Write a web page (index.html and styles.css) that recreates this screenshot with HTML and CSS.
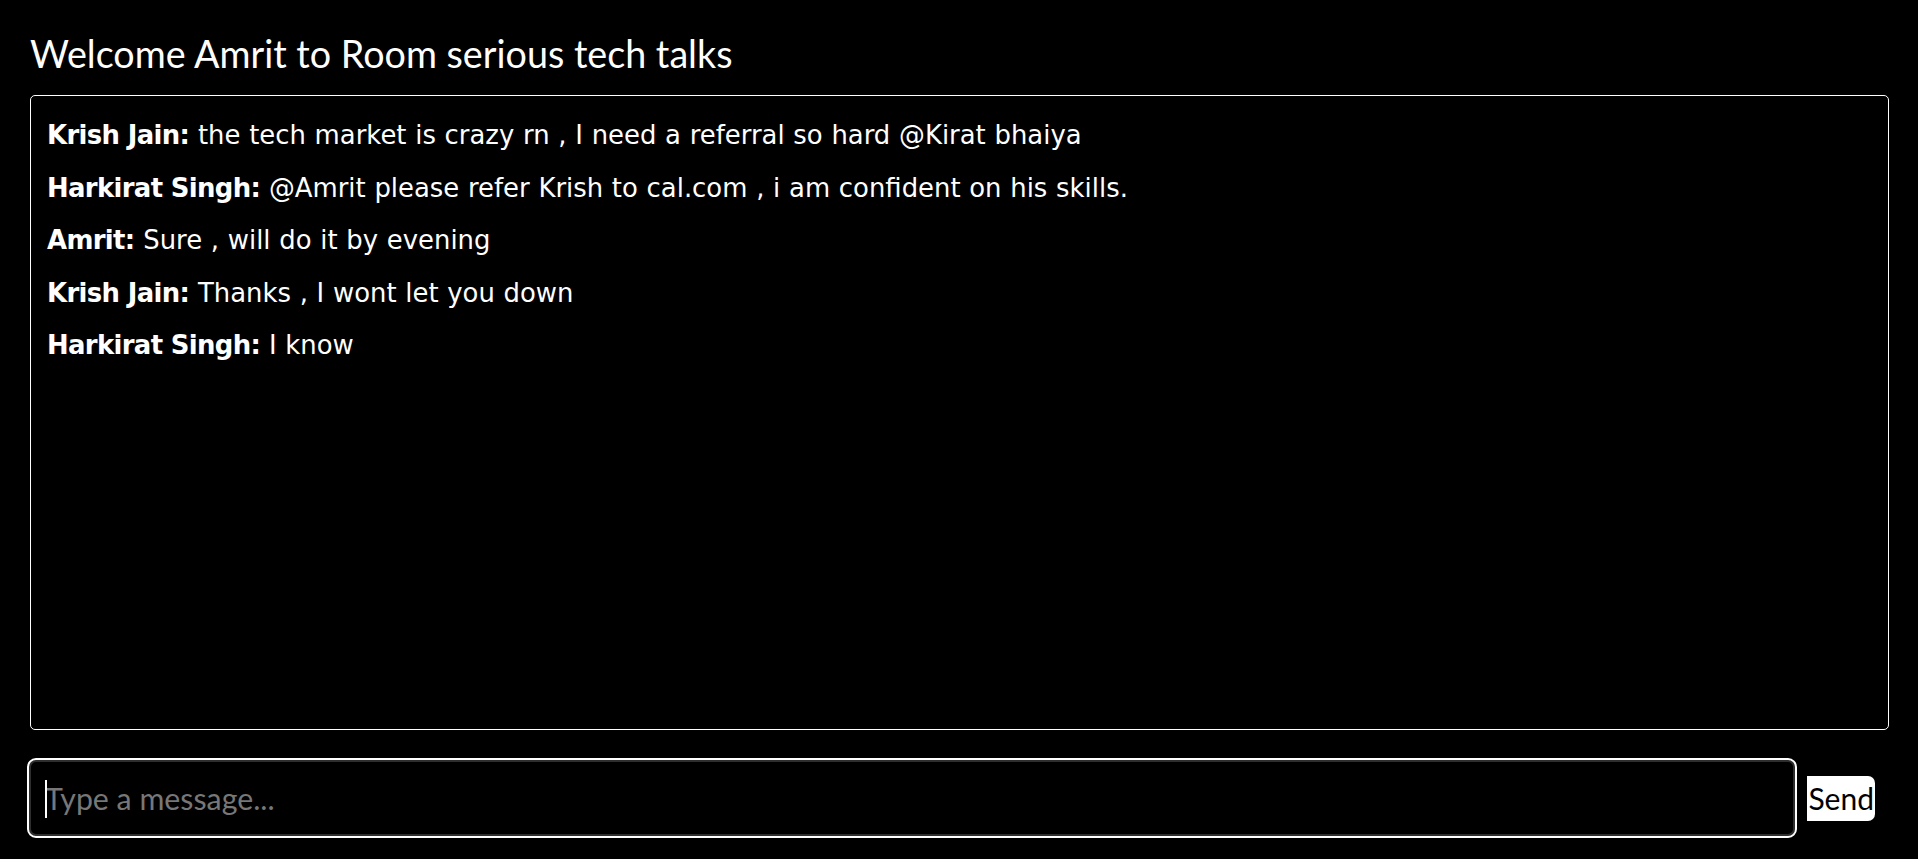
FILE: index.html
```html
<!DOCTYPE html>
<html lang="en">
<head>
<meta charset="utf-8">
<title>Chat Room</title>
<link rel="stylesheet" href="styles.css">
</head>
<body>
<div class="page">
  <h1 class="room-title">Welcome Amrit to Room serious tech talks</h1>
  <div class="chat-box">
    <div class="message"><span class="sender">Krish Jain:</span> the tech market is crazy rn , I need a referral so hard @Kirat bhaiya</div>
    <div class="message"><span class="sender">Harkirat Singh:</span> @Amrit please refer Krish to cal.com , i am confident on his skills.</div>
    <div class="message"><span class="sender">Amrit:</span> Sure , will do it by evening</div>
    <div class="message"><span class="sender">Krish Jain:</span> Thanks , I wont let you down</div>
    <div class="message"><span class="sender">Harkirat Singh:</span> I know</div>
  </div>
  <div class="composer">
    <div class="input-wrap">
      <input class="msg-input" type="text" placeholder="Type a message...">
      <span class="caret"></span>
    </div>
    <button class="send-btn" type="button">Send</button>
  </div>
</div>
</body>
</html>
```
FILE: styles.css
```css
* { box-sizing: border-box; }
html, body { margin: 0; height: 100%; background: #000; }
body { color: #fff; font-family: "DejaVu Sans", sans-serif; }
.page {
  height: 100vh;
  display: flex;
  flex-direction: column;
  padding: 0 29px 21px 30px;
}
.room-title {
  margin: 31px 0 19px;
  font-family: Lato, sans-serif;
  font-weight: 400;
  font-size: 37.7px;
  line-height: 45px;
}
.chat-box {
  flex: 1;
  border: 1px solid #fff;
  border-radius: 5px;
  padding: 13px 16px;
  overflow: hidden;
}
.message {
  font-family: "DejaVu Sans", sans-serif;
  font-size: 25.9px;
  line-height: 52.5px;
  white-space: nowrap;
  word-spacing: 0.5px;
}
.sender { font-weight: 700; letter-spacing: -0.65px; word-spacing: 0; }
.composer {
  margin: 28px 14px 0 -3px;
  display: flex;
  align-items: center;
  gap: 10px;
}
.input-wrap {
  flex: 1;
  position: relative;
  display: flex;
}
.msg-input {
  flex: 1;
  width: 100%;
  height: 80px;
  background: #000;
  color: #fff;
  border: 2px solid #fff;
  border-radius: 9px;
  box-shadow: inset 0 0 0 2px #2e2e2e;
  padding: 0 16px;
  font-family: Lato, sans-serif;
  font-size: 30.3px;
  outline: none;
}
.msg-input::placeholder { color: #777; }
.caret {
  position: absolute;
  left: 18px;
  top: 22px;
  width: 1.5px;
  height: 38px;
  background: #fff;
}
.send-btn {
  height: 45px;
  padding: 0 1px;
  border: none;
  border-radius: 0 7px 7px 0;
  background: #fff;
  color: #000;
  font-family: Lato, sans-serif;
  font-size: 30px;
  line-height: 45px;
}
```
